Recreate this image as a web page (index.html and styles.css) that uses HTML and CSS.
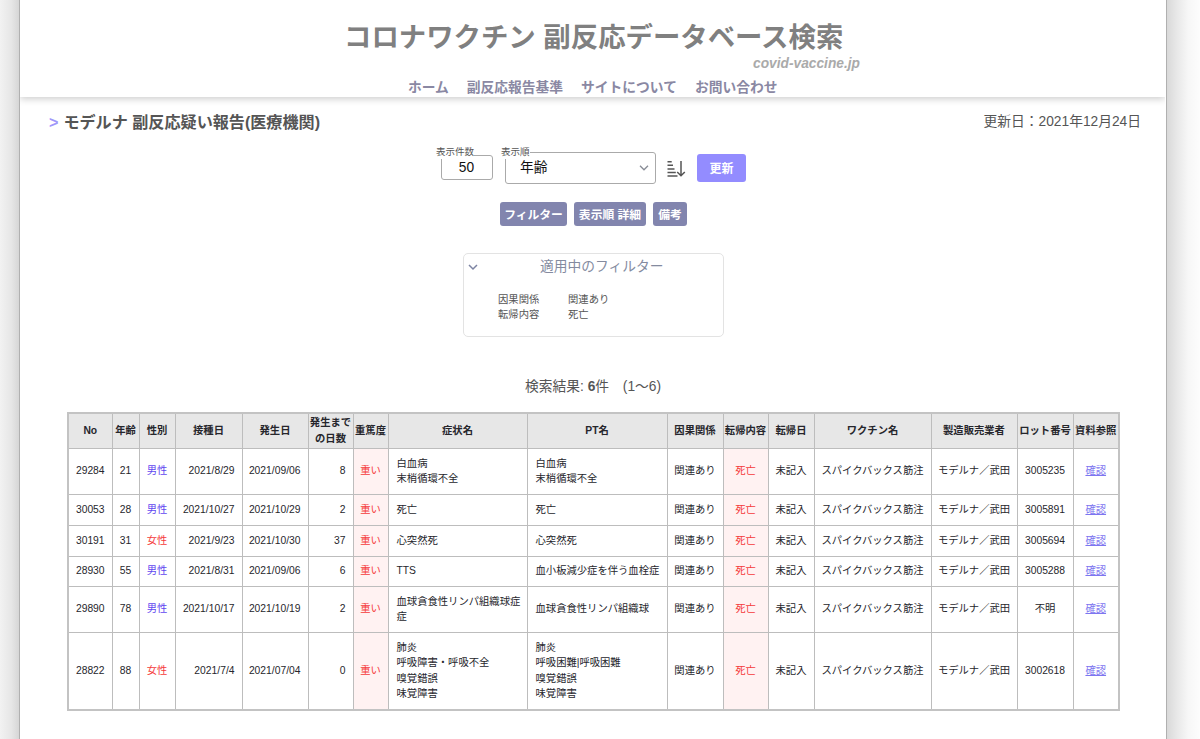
FILE: index.html
```html
<!DOCTYPE html>
<html lang="ja">
<head>
<meta charset="utf-8">
<title>コロナワクチン 副反応データベース検索</title>
<link rel="stylesheet" href="styles.css">
</head>
<body>
<div class="page">
  <header class="header">
    <div class="brand">
      <h1 class="title">コロナワクチン 副反応データベース検索</h1>
      <div class="domain">covid-vaccine.jp</div>
    </div>
    <nav class="nav"><a>ホーム</a><a>副反応報告基準</a><a>サイトについて</a><a>お問い合わせ</a></nav>
  </header>
  <div class="heading">
    <h2 class="subtitle"><span class="mark">&gt;</span>モデルナ 副反応疑い報告(医療機関)</h2>
    <div class="updated">更新日：2021年12月24日</div>
  </div>
  <div class="controls">
    <div class="field count"><span class="label">表示件数</span><span class="value">50</span></div>
    <div class="field order"><span class="label">表示順</span><span class="value">年齢</span>
      <svg class="chev" width="10" height="6" viewBox="0 0 10 6"><path d="M1 .8l4 4 4-4" fill="none" stroke="#888c96" stroke-width="1.3"/></svg></div>
    <svg class="sort" width="19" height="18" viewBox="0 0 19 18" fill="none" stroke="#555" stroke-width="1.5"><path d="M.5 1.7h4.2M.5 5.3h5.5M.5 8.9h7M.5 12.5h8.3M.5 16.1h10M14 1v14.6M10.2 11.9l3.8 3.9 3.8-3.9"/></svg>
    <button class="refresh">更新</button>
  </div>
  <div class="tabs"><button class="tab t1">フィルター</button><button class="tab t2">表示順 詳細</button><button class="tab t3">備考</button></div>
  <section class="filter">
    <div class="filter-head"><svg width="10" height="7" viewBox="0 0 10 7"><path d="M1 1l4 4 4-4" fill="none" stroke="#7d84a3" stroke-width="1.5"/></svg><span>適用中のフィルター</span></div>
    <dl class="filter-list"><dt>因果関係</dt><dd>関連あり</dd><dt>転帰内容</dt><dd>死亡</dd></dl>
  </section>
  <p class="result">検索結果: <b>6</b>件　(1〜6)</p>
  <table class="grid">
    <colgroup><col class="w-no"><col class="w-age"><col class="w-sex"><col class="w-date"><col class="w-date2"><col class="w-days"><col class="w-sev"><col class="w-name"><col class="w-pt"><col class="w-rel"><col class="w-out"><col class="w-outd"><col class="w-vac"><col class="w-mak"><col class="w-lot"><col class="w-ref"></colgroup>
    <thead><tr class="h-head"><th>No</th><th>年齢</th><th>性別</th><th>接種日</th><th>発生日</th><th>発生まで<br>の日数</th><th>重篤度</th><th>症状名</th><th>PT名</th><th>因果関係</th><th>転帰内容</th><th>転帰日</th><th>ワクチン名</th><th>製造販売業者</th><th>ロット番号</th><th>資料参照</th></tr></thead>
    <tbody>
      <tr class="h2"><td>29284</td><td>21</td><td class="male">男性</td><td class="num">2021/8/29</td><td class="num">2021/09/06</td><td class="num">8</td><td class="alert">重い</td><td class="text">白血病<br>末梢循環不全</td><td class="text">白血病<br>末梢循環不全</td><td>関連あり</td><td class="alert">死亡</td><td>未記入</td><td>スパイクバックス筋注</td><td>モデルナ／武田</td><td>3005235</td><td><a class="link">確認</a></td></tr>
      <tr class="h1"><td>30053</td><td>28</td><td class="male">男性</td><td class="num">2021/10/27</td><td class="num">2021/10/29</td><td class="num">2</td><td class="alert">重い</td><td class="text">死亡</td><td class="text">死亡</td><td>関連あり</td><td class="alert">死亡</td><td>未記入</td><td>スパイクバックス筋注</td><td>モデルナ／武田</td><td>3005891</td><td><a class="link">確認</a></td></tr>
      <tr class="h1"><td>30191</td><td>31</td><td class="female">女性</td><td class="num">2021/9/23</td><td class="num">2021/10/30</td><td class="num">37</td><td class="alert">重い</td><td class="text">心突然死</td><td class="text">心突然死</td><td>関連あり</td><td class="alert">死亡</td><td>未記入</td><td>スパイクバックス筋注</td><td>モデルナ／武田</td><td>3005694</td><td><a class="link">確認</a></td></tr>
      <tr class="h1b"><td>28930</td><td>55</td><td class="male">男性</td><td class="num">2021/8/31</td><td class="num">2021/09/06</td><td class="num">6</td><td class="alert">重い</td><td class="text">TTS</td><td class="text">血小板減少症を伴う血栓症</td><td>関連あり</td><td class="alert">死亡</td><td>未記入</td><td>スパイクバックス筋注</td><td>モデルナ／武田</td><td>3005288</td><td><a class="link">確認</a></td></tr>
      <tr class="h2"><td>29890</td><td>78</td><td class="male">男性</td><td class="num">2021/10/17</td><td class="num">2021/10/19</td><td class="num">2</td><td class="alert">重い</td><td class="text">血球貪食性リンパ組織球症<br>症</td><td class="text">血球貪食性リンパ組織球</td><td>関連あり</td><td class="alert">死亡</td><td>未記入</td><td>スパイクバックス筋注</td><td>モデルナ／武田</td><td>不明</td><td><a class="link">確認</a></td></tr>
      <tr class="h4"><td>28822</td><td>88</td><td class="female">女性</td><td class="num">2021/7/4</td><td class="num">2021/07/04</td><td class="num">0</td><td class="alert">重い</td><td class="text">肺炎<br>呼吸障害・呼吸不全<br>嗅覚錯誤<br>味覚障害</td><td class="text">肺炎<br>呼吸困難|呼吸困難<br>嗅覚錯誤<br>味覚障害</td><td>関連あり</td><td class="alert">死亡</td><td>未記入</td><td>スパイクバックス筋注</td><td>モデルナ／武田</td><td>3002618</td><td><a class="link">確認</a></td></tr>
    </tbody>
  </table>
</div>
</body>
</html>
```
FILE: styles.css
```css
* { box-sizing: border-box; }
body {
  margin: 0;
  height: 739px;
  background:
    linear-gradient(to right, #f2f2f2, #e6e6e6 60%, #d6d6d6) 0 0 / 19px 100% no-repeat,
    linear-gradient(to right, #d9d9d9, #e8e8e8 30%, #f7f7f7 65%, #fdfdfd) 1167px 0 / 33px 100% no-repeat,
    #fff;
  color: #555;
  font: 13.76px/20px "Liberation Sans", "Noto Sans CJK JP", sans-serif;
}
h1, h2, p, dl, dd { margin: 0; }
button { font-family: inherit; border: 0; padding: 0; color: #fff; font-weight: bold; }
.page {
  width: 1148px;
  height: 739px;
  margin-left: 19px;
  border: solid #b0b0b0;
  border-width: 0 1px;
  background: #fff;
}
.header {
  width: 1145px;
  height: 97px;
  padding-top: 18px;
  box-shadow: 0 2px 7px rgba(0, 0, 0, .2);
  clip-path: inset(0 0 -12px 0);
}
.brand { width: 516px; margin-left: 324px; }
.title { font-size: 27.4px; line-height: 40px; color: #808080; white-space: nowrap; }
.domain { margin-top: -3px; line-height: 18px; text-align: right; font-weight: bold; font-style: italic; color: #aaa; }
.nav { display: flex; gap: 18px; margin: 5px 0 0 388px; line-height: 20px; font-weight: bold; color: #8a88a3; white-space: nowrap; }
.heading { display: flex; justify-content: space-between; padding: 14px 25px 0 29px; }
.subtitle { font-size: 16.1px; line-height: 23px; }
.updated { line-height: 21px; }
.mark { margin-right: 5px; color: #9f97fa; }
.controls { display: flex; height: 32px; margin: 18px 0 0 421px; }
.field { position: relative; border: 1px solid #aaa; border-radius: 3px; color: #111; }
.label { position: absolute; top: -11px; left: -6px; background: #fff; font-size: 9.5px; line-height: 14px; color: #555; white-space: nowrap; }
.count { width: 52px; height: 25px; margin-top: 3px; text-align: center; }
.count .value { margin-right: 1px; line-height: 24px; }
.order { width: 151px; height: 32px; margin-left: 12px; padding-left: 14px; }
.order .label { top: -8px; left: -5px; }
.order .value { line-height: 29px; }
.chev { position: absolute; right: 6px; top: 12px; }
.sort { margin: 8px 0 0 11px; }
.refresh { width: 49px; height: 28px; margin: 2px 0 0 11px; padding-bottom: 1px; border-radius: 3px; background: #938cff; font-size: 12px; }
.tabs { display: flex; gap: 7px; margin: 18px 0 0 480px; }
.tab { height: 24px; padding-bottom: 2px; border-radius: 3px; background: #8285ae; font-size: 11.8px; }
.t1 { width: 67px; }
.t2 { width: 72px; }
.t3 { width: 34px; }
.filter { width: 261px; height: 84px; margin: 27px 0 0 443px; border: 1px solid #e3e3e3; border-radius: 5px; }
.filter-head { display: flex; align-items: center; height: 26px; padding-left: 4px; color: #848b9f; }
.filter-head span { margin-left: 62px; }
.filter-list { display: grid; grid-template-columns: 70px 100px; margin: 12px 0 0 34px; font-size: 10.32px; line-height: 15px; }
.result { margin: 40px 0 0 505px; line-height: 20px; white-space: pre; }
.grid {
  width: 1052px;
  margin: 15px 0 0 47px;
  table-layout: fixed;
  border-collapse: collapse;
  border: 2px solid #c3c3c3;
  color: #26262c;
  font-size: 10.32px;
  line-height: 15.4px;
}
.grid th, .grid td { padding: 0; border: 1px solid #bdbdbd; text-align: center; white-space: nowrap; }
.grid th { background: #e7e7e7; }
.w-no { width: 44px; }
.w-age { width: 27px; }
.w-sex { width: 36px; }
.w-date { width: 67px; }
.w-date2 { width: 66px; }
.w-days { width: 45px; }
.w-sev { width: 35px; }
.w-name { width: 139px; }
.w-pt { width: 140px; }
.w-rel { width: 56px; }
.w-out { width: 45px; }
.w-outd { width: 46px; }
.w-vac { width: 117px; }
.w-mak { width: 86px; }
.w-lot { width: 56px; }
.w-ref { width: 46px; }
.h-head { height: 35px; }
.h1 { height: 31px; }
.h1b { height: 30px; }
.h2 { height: 46px; }
.h4 { height: 78px; }
.grid .num { text-align: right; padding-right: 7px; }
.grid .text { text-align: left; padding-left: 8px; }
.grid .male { color: #6247f0; }
.grid .female { color: #f53b3b; }
.grid .alert { color: #f53b3b; background: #fff2f2; }
.link { color: #7d75f0; text-decoration: underline; }
```
